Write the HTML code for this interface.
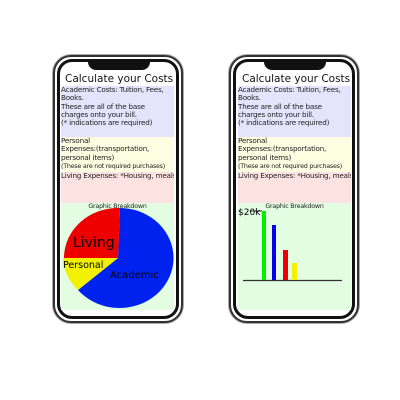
<html><body style="margin:0;width:400px;height:400px;background:#fff;position:relative;overflow:hidden;font-family:'DejaVu Sans','Liberation Sans',sans-serif;">
<style>
.ph{position:absolute;top:55px;width:130px;height:268px;border:2px solid #333;border-radius:18px;background:#fff;box-sizing:border-box;box-shadow:0 0 0 1px #aaa;}
.ph2{position:absolute;left:2px;top:2px;right:2px;bottom:2px;border:3px solid #111;border-radius:15px;}
.notch{position:absolute;top:62px;width:62px;height:8px;background:#111;border-radius:0 0 8px 8px;}
.t{position:absolute;font-size:10.5px;color:#111;white-space:nowrap;}
.s{position:absolute;font-size:7.2px;line-height:8.3px;color:#222;white-space:nowrap;overflow:hidden;letter-spacing:-0.2px;}
</style>
<div class="ph" style="left:53px"><div class="ph2"></div></div>
<div class="ph" style="left:229px"><div class="ph2"></div></div>
<div class="notch" style="left:88px"></div>
<div class="notch" style="left:264px"></div>

<!-- phone 1 -->
<div class="t" style="left:65px;top:73px">Calculate your Costs</div>
<div class="s" style="left:61px;top:86px;width:113px;height:51px;background:#e4e4fc">Academic Costs: Tuition, Fees,<br>Books.<br>These are all of the base<br>charges onto your bill.<br>(* indications are required)</div>
<div class="s" style="left:61px;top:137px;width:113px;height:35px;background:#fefee2">Personal<br>Expenses:(transportation,<br>personal items)<br><span style="font-size:6.4px;letter-spacing:-0.25px">(These are not required purchases)</span></div>
<div class="s" style="left:61px;top:172px;width:113px;height:31px;background:#fde2e2">Living Expenses: *Housing, meals</div>
<div class="s" style="left:61px;top:203px;width:113px;height:107px;background:#e2fde2"><div style="text-align:center;font-size:6.3px;line-height:7px">Graphic Breakdown</div></div>
<svg style="position:absolute;left:0;top:0" width="400" height="400">
<path d="M118 258 L120 208 A54 50 0 1 1 78 290 Z" fill="#0022ee"/>
<path d="M118 258 L64 258 A54 50 0 0 1 120 208 Z" fill="#ee0000"/>
<path d="M118 258 L78 290 A54 50 0 0 1 63 258 Z" fill="#f2f200"/>
<text x="73" y="247" font-size="14" font-family="DejaVu Sans">Living</text>
<text x="63" y="268" font-size="9.5" font-family="DejaVu Sans">Personal</text>
<text x="110" y="278" font-size="10" font-family="DejaVu Sans">Academic</text>
</svg>

<!-- phone 2 -->
<div class="t" style="left:242px;top:73px">Calculate your Costs</div>
<div class="s" style="left:238px;top:86px;width:113px;height:51px;background:#e4e4fc">Academic Costs: Tuition, Fees,<br>Books.<br>These are all of the base<br>charges onto your bill.<br>(* indications are required)</div>
<div class="s" style="left:238px;top:137px;width:113px;height:35px;background:#fefee2">Personal<br>Expenses:(transportation,<br>personal items)<br><span style="font-size:6.4px;letter-spacing:-0.25px">(These are not required purchases)</span></div>
<div class="s" style="left:238px;top:172px;width:113px;height:31px;background:#fde2e2">Living Expenses: *Housing, meals</div>
<div class="s" style="left:238px;top:203px;width:113px;height:107px;background:#e2fde2"><div style="text-align:center;font-size:6.3px;line-height:7px">Graphic Breakdown</div></div>
<svg style="position:absolute;left:0;top:0" width="400" height="400">
<line x1="243" y1="280.5" x2="342" y2="280.5" stroke="#333" stroke-width="1.2"/>
<line x1="250" y1="211" x2="262" y2="211" stroke="#333" stroke-width="1"/>
<text x="238" y="215" font-size="9" font-family="DejaVu Sans">$20k</text>
<rect x="262" y="211" width="4" height="69" fill="#00ee00"/>
<rect x="272" y="225" width="4" height="55" fill="#0000ee"/>
<rect x="283" y="250" width="5" height="30" fill="#ee0000"/>
<rect x="292" y="263" width="5" height="17" fill="#f2f200"/>
</svg>
</body></html>
